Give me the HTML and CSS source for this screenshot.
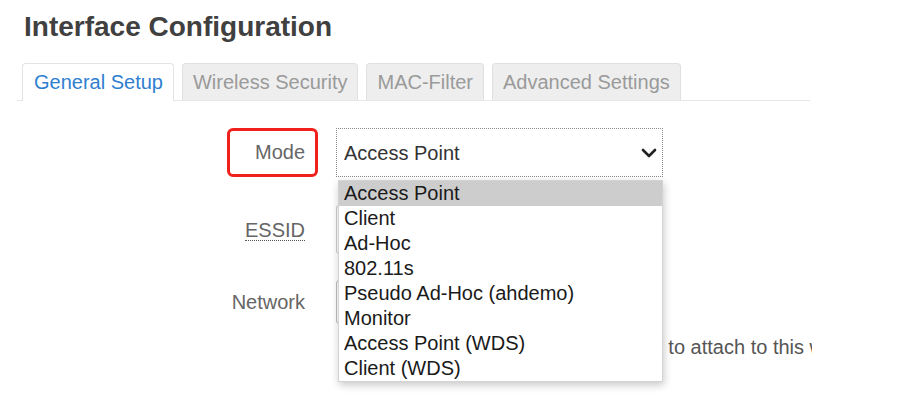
FILE: index.html
```html
<!DOCTYPE html>
<html>
<head>
<meta charset="utf-8">
<link rel="stylesheet" href="styles.css">
</head>
<body>
<div class="page">
  <h2 class="title">Interface Configuration</h2>
  <ul class="tabs">
    <li class="tab active">General Setup</li>
    <li class="tab">Wireless Security</li>
    <li class="tab">MAC-Filter</li>
    <li class="tab">Advanced Settings</li>
  </ul>
  <div class="form">
    <div class="row row-mode">
      <div class="label-cell"><span class="mark">Mode</span></div>
      <div class="field">
        <div class="select focused">
          <span>Access Point</span>
          <svg class="chev" width="16" height="10" viewBox="0 0 16 10"><polyline points="2,2 8,8 14,2" fill="none" stroke="#222" stroke-width="2.6" stroke-linecap="round" stroke-linejoin="round"/></svg>
        </div>
        <ul class="dropdown">
          <li class="opt sel">Access Point</li>
          <li class="opt">Client</li>
          <li class="opt">Ad-Hoc</li>
          <li class="opt">802.11s</li>
          <li class="opt">Pseudo Ad-Hoc (ahdemo)</li>
          <li class="opt">Monitor</li>
          <li class="opt">Access Point (WDS)</li>
          <li class="opt">Client (WDS)</li>
        </ul>
      </div>
    </div>
    <div class="row row-essid">
      <div class="label-cell"><span class="lbl abbr">ESSID</span></div>
      <div class="field"><div class="input"></div></div>
    </div>
    <div class="row row-net">
      <div class="label-cell"><span class="lbl">Network</span></div>
      <div class="field">
        <div class="input net"></div>
        <div class="desc">Choose the network(s) you want to attach to this wireless interface</div>
      </div>
    </div>
  </div>
</div>
</body>
</html>
```
FILE: styles.css
```css
html, body {
  margin: 0;
  padding: 0;
  background: #fff;
}
body {
  font-family: "Liberation Sans", Arial, sans-serif;
}
.page {
  width: 812px;
  height: 409px;
  overflow: hidden;
}
.title {
  margin: 0;
  padding: 11px 0 0 24px;
  font-size: 28px;
  line-height: 32px;
  font-weight: bold;
  color: #404040;
}
.tabs {
  list-style: none;
  margin: 20px 0 0 17px;
  padding: 0 0 0 5px;
  display: flex;
  gap: 8px;
  border-bottom: 1px solid #e6e6e6;
  width: 788px;
}
.tab {
  font-size: 20px;
  line-height: 22px;
  padding: 7px 10px 7px 10px;
  color: #9a9a9a;
  background: #eeeeee;
  border: 1px solid #e0e0e0;
  border-bottom: none;
  border-radius: 4px 4px 0 0;
  margin-bottom: 0;
}
.tab.active {
  background: #fff;
  color: #2f7fd1;
  border-color: #e3e3e3;
  margin-bottom: -1px;
  padding-bottom: 8px;
  padding-left: 11px;
}
.form {
  margin-top: 27px;
}
.row {
  display: flex;
  align-items: flex-start;
}
.label-cell {
  width: 318px;
  display: flex;
  justify-content: flex-end;
  align-items: center;
  flex: none;
  align-self: stretch;
}
.field {
  margin-left: 18px;
  width: 327px;
  position: relative;
  flex: none;
}
.row-mode .label-cell { height: 49px; }
.mark {
  box-sizing: border-box;
  width: 91px;
  height: 49px;
  border: 3px solid #f0201c;
  border-radius: 6px;
  display: flex;
  align-items: center;
  justify-content: flex-end;
  padding-right: 10px;
  font-size: 20px;
  color: #666;
}
.lbl {
  font-size: 20px;
  line-height: 22px;
  color: #666;
  margin-right: 13px;
}
.lbl.abbr {
  line-height: 19px;
  border-bottom: 1px dotted #555;
  margin-top: 2px;
}
.select {
  box-sizing: border-box;
  height: 49px;
  border: 1px dotted #8a8a8a;
  display: flex;
  align-items: center;
  justify-content: space-between;
  padding: 2px 5px 0 7px;
  font-size: 20px;
  color: #333;
}
.chev {
  display: block;
  margin-top: -2px;
}
.dropdown {
  position: absolute;
  left: 2px;
  top: 52px;
  width: 325px;
  box-sizing: border-box;
  margin: 0;
  padding: 0;
  list-style: none;
  background: #fff;
  border: 1px solid #d4d4d4;
  box-shadow: 1px 3px 8px rgba(0, 0, 0, 0.22);
  z-index: 5;
}
.opt {
  font-size: 20px;
  line-height: 25px;
  height: 25px;
  padding-left: 5px;
  color: #1a1a1a;
}
.opt.sel {
  background: #cdcdcd;
}
.row-essid {
  margin-top: 28px;
}
.row-essid .label-cell { height: 49px; }
.input {
  box-sizing: border-box;
  height: 49px;
  border: 1px solid #ccc;
  border-radius: 3px;
}
.row-net {
  margin-top: 26px;
}
.row-net .label-cell { height: 44px; }
.input.net {
  height: 44px;
  border-color: #bdbdbd;
}
.desc {
  margin-top: 12px;
  padding-left: 40px;
  font-size: 20px;
  line-height: 22px;
  color: #555;
  white-space: nowrap;
}
```
